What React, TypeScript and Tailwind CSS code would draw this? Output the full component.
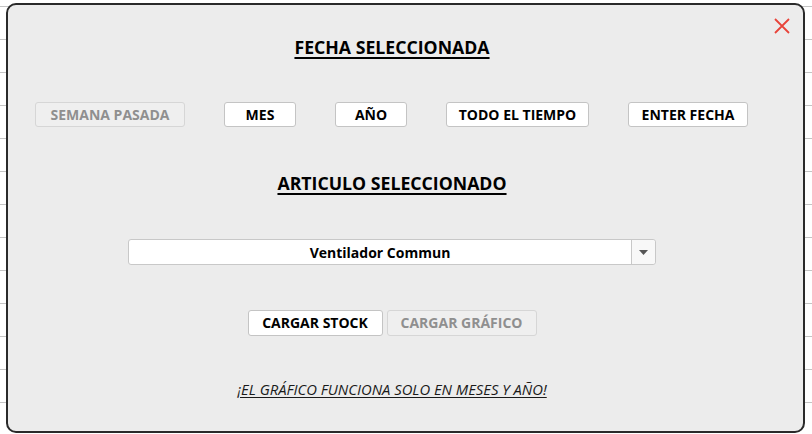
import React from 'react';

const font = { fontFamily: '"Open Sans", "Noto Sans", sans-serif' };

function DateButton({ label, width, disabled }: { label: string; width: string; disabled?: boolean }) {
  return (
    <button
      className={
        disabled
          ? `${width} h-[25px] rounded-[3px] border border-[#d6d6d6] bg-[#efefef] text-[14px] font-bold text-[#8f8f8f] leading-none`
          : `${width} h-[25px] rounded-[3px] border border-[#c4c4c4] bg-white text-[14px] font-bold text-black leading-none`
      }
    >
      {label}
    </button>
  );
}

export default function App() {
  return (
    <div
      className="w-[812px] h-[434px] bg-white overflow-hidden pt-[3px] pl-[6px] bg-[repeating-linear-gradient(to_bottom,transparent_0px,transparent_6px,#c4c4c4_6px,#c4c4c4_7px,transparent_7px,transparent_33px)]"
      style={font}
    >
      <div className="relative w-[799px] h-[430px] rounded-[10px] border-2 border-[#2a2a2a] bg-[#ececec] flex flex-col">
        {/* close */}
        <button className="absolute top-[12px] right-[12px] w-[18px] h-[18px] flex items-center justify-center">
          <svg width="16" height="16" viewBox="0 0 16 16">
            <path d="M1 1 L15 15 M15 1 L1 15" stroke="#e8443a" strokeWidth="1.8" />
          </svg>
        </button>

        <div className="w-[768px] flex flex-col items-center">
          <h1 className="mt-[31px] text-[17.7px] leading-[22px] font-bold text-black underline underline-offset-[3px] decoration-2">
            FECHA SELECCIONADA
          </h1>
        </div>

        <div className="mt-[44px] pl-[27px] flex gap-[39px]">
          <DateButton label="SEMANA PASADA" width="w-[150px]" disabled />
          <DateButton label="MES" width="w-[72px]" />
          <DateButton label="AÑO" width="w-[72px]" />
          <DateButton label="TODO EL TIEMPO" width="w-[143px]" />
          <DateButton label="ENTER FECHA" width="w-[120px]" />
        </div>

        <div className="w-[768px] flex flex-col items-center">
          <h2 className="mt-[45px] text-[17.7px] leading-[22px] font-bold text-black underline underline-offset-[3px] decoration-2">
            ARTICULO SELECCIONADO
          </h2>

          <div className="mt-[45px] w-[528px] h-[26px] flex rounded-[3px] border border-[#c8c8c8] bg-white">
            <div className="flex-1 flex items-center justify-center text-[14px] font-bold text-black">
              Ventilador Commun
            </div>
            <div className="w-[24px] border-l border-[#c8c8c8] bg-[#f8f8f8] flex items-center justify-center rounded-r-[3px]">
              <svg width="9" height="5" viewBox="0 0 9 5">
                <path d="M0 0 H9 L4.5 5 Z" fill="#555" />
              </svg>
            </div>
          </div>

          <div className="mt-[45px] flex gap-[4px]">
            <button className="w-[135px] h-[26px] rounded-[3px] border border-[#c4c4c4] bg-white text-[14px] font-bold text-black leading-none">
              CARGAR STOCK
            </button>
            <button className="w-[150px] h-[26px] rounded-[3px] border border-[#d6d6d6] bg-[#efefef] text-[14px] font-bold text-[#8f8f8f] leading-none">
              CARGAR GRÁFICO
            </button>
          </div>

          <p className="mt-[43px] text-[14.8px] leading-[20px] italic text-[#1a1a1a] underline underline-offset-[2px]">
            ¡EL GRÁFICO FUNCIONA SOLO EN MESES Y AÑO!
          </p>
        </div>
      </div>
    </div>
  );
}
